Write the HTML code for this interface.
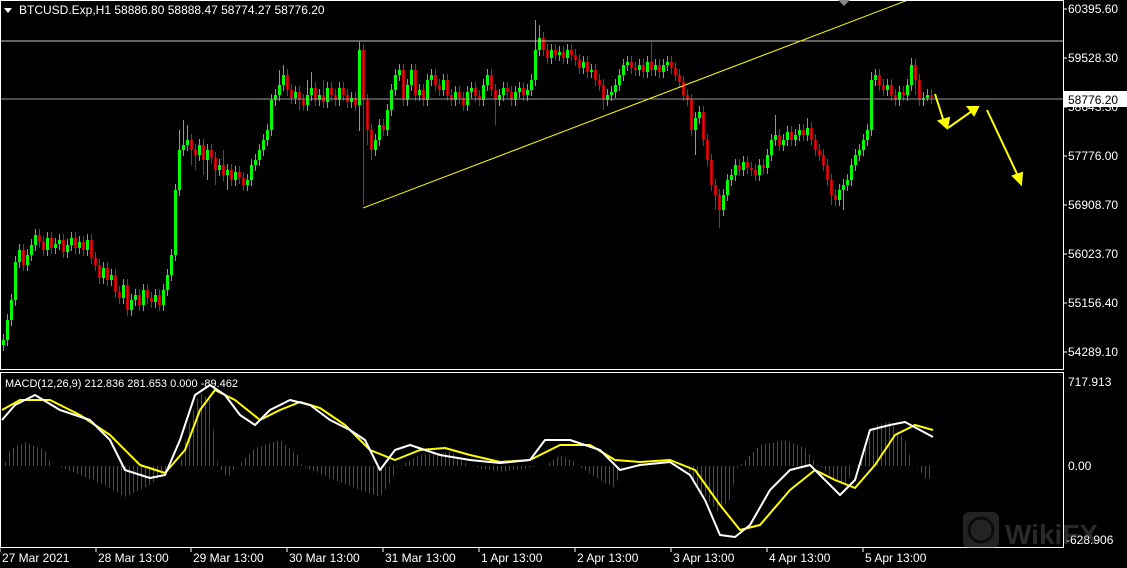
<!DOCTYPE html>
<html><head><meta charset="utf-8"><style>
html,body{margin:0;padding:0;background:#000;width:1127px;height:568px;overflow:hidden}
svg{display:block}
text{font-family:"Liberation Sans",sans-serif;font-size:12px;fill:#fff}
</style></head><body>
<svg width="1127" height="568" xmlns="http://www.w3.org/2000/svg">
<defs>
<pattern id="pr" x="0" y="0" width="4" height="10" patternUnits="userSpaceOnUse"><rect x="1" y="0" width="1" height="10" fill="#a02535"/></pattern>
<pattern id="pg" x="0" y="0" width="4" height="10" patternUnits="userSpaceOnUse"><rect x="1" y="0" width="1" height="10" fill="#1f6a1f"/></pattern>
</defs>
<rect width="1127" height="568" fill="#000"/>
<!-- histogram -->
<polygon fill="url(#pr)" points="4,466 10,450 25,442 45,450 52,466 180,466 190,420 200,392 210,400 218,466 238,466 255,448 280,440 298,455 302,466 400,466 420,455 450,452 470,466 545,466 560,455 575,462 578,466 740,466 760,445 785,440 805,448 818,466 857,466 875,425 890,422 905,440 913,466"/>
<polygon fill="url(#pg)" points="58,466 80,475 105,485 125,497 150,485 172,466 218,466 228,478 236,466 302,466 330,478 360,490 380,497 392,480 398,466 470,466 500,472 540,466 578,466 600,480 615,488 622,466 686,466 700,490 718,512 730,500 738,466 820,466 835,480 848,484 852,466 917,466 925,478 933,478 933,466"/>
<!-- candles -->
<path fill="none" stroke="#00ff00" stroke-width="1" d="M3.5 334V351M7.5 314V346M11.5 294V326M15.5 256V306M19.5 244V268M27.5 249V271M31.5 239V261M35.5 229V251M47.5 232V256M55.5 238V254M59.5 234V250M67.5 239V258M71.5 232V251M79.5 236V254M87.5 234V256M103.5 262V284M111.5 269V286M123.5 279V304M131.5 294V316M135.5 289V306M143.5 284V311M155.5 289V308M163.5 284V311M167.5 269V296M171.5 249V281M175.5 184V261M179.5 130V196M183.5 120V156M187.5 125V151M199.5 139V161M207.5 144V180M219.5 159V176M227.5 164V190M235.5 166V186M247.5 174V191M251.5 159V186M255.5 154V171M259.5 144V166M263.5 134V156M267.5 124V146M271.5 94V136M275.5 89V106M279.5 70V101M283.5 65V91M295.5 86V104M307.5 80V111M311.5 72V101M319.5 89V106M327.5 82V108M339.5 82V106M351.5 92V108M359.5 42V131M375.5 134V156M379.5 119V146M387.5 104V136M391.5 84V116M395.5 69V96M399.5 64V81M407.5 79V106M411.5 64V91M419.5 84V101M427.5 74V106M431.5 69V86M443.5 74V96M455.5 86V106M467.5 86V111M471.5 82V98M483.5 79V106M487.5 69V91M499.5 89V106M503.5 82V101M515.5 86V106M519.5 82V98M527.5 84V101M531.5 74V96M535.5 20V86M539.5 25V56M551.5 44V64M559.5 46V61M567.5 44V64M583.5 56V74M591.5 64V78M607.5 89V106M611.5 86V101M615.5 79V98M619.5 69V91M623.5 59V81M627.5 56V71M639.5 59V76M647.5 56V78M655.5 59V76M663.5 59V78M667.5 56V71M695.5 112V155M699.5 106V124M723.5 189V216M727.5 174V201M731.5 169V186M735.5 159V181M743.5 156V176M759.5 159V181M767.5 149V174M771.5 134V161M775.5 115V146M783.5 134V151M787.5 126V146M795.5 129V146M799.5 124V141M807.5 118V141M839.5 184V206M843.5 179V210M847.5 174V191M851.5 159V186M855.5 149V171M859.5 144V161M863.5 134V156M867.5 124V146M871.5 72V136M875.5 69V86M887.5 79V96M899.5 86V106M907.5 79V101M911.5 58V91M923.5 92V106M927.5 89V101"/>
<path fill="none" stroke="#00ff00" stroke-width="3" d="M3.5 340V345M7.5 320V340M11.5 300V320M15.5 262V300M19.5 250V262M27.5 255V265M31.5 245V255M35.5 235V245M47.5 238V250M55.5 244V248M59.5 240V244M67.5 245V252M71.5 238V245M79.5 242V248M87.5 240V250M103.5 268V278M111.5 275V280M123.5 285V298M131.5 300V310M135.5 295V300M143.5 290V305M155.5 295V302M163.5 290V305M167.5 275V290M171.5 255V275M175.5 190V255M179.5 150V190M183.5 145V150M187.5 140V145M199.5 145V155M207.5 150V160M219.5 165V170M227.5 170V175M235.5 172V180M247.5 180V185M251.5 165V180M255.5 160V165M259.5 150V160M263.5 140V150M267.5 130V140M271.5 100V130M275.5 95V100M279.5 85V95M283.5 75V85M295.5 92V98M307.5 95V105M311.5 88V95M319.5 95V100M327.5 88V102M339.5 88V100M351.5 98V102M359.5 50V105M375.5 140V150M379.5 125V140M387.5 110V130M391.5 90V110M395.5 75V90M399.5 70V75M407.5 85V100M411.5 70V85M419.5 90V95M427.5 80V100M431.5 75V80M443.5 80V90M455.5 92V100M467.5 92V105M471.5 88V92M483.5 85V100M487.5 75V85M499.5 95V100M503.5 88V95M515.5 92V100M519.5 88V92M527.5 90V95M531.5 80V90M535.5 50V80M539.5 38V50M551.5 50V58M559.5 52V55M567.5 50V58M583.5 62V68M591.5 70V72M607.5 95V100M611.5 92V95M615.5 85V92M619.5 75V85M623.5 65V75M627.5 62V65M639.5 65V70M647.5 62V72M655.5 65V70M663.5 65V72M667.5 62V65M695.5 118V130M699.5 112V118M723.5 195V210M727.5 180V195M731.5 175V180M735.5 165V175M743.5 162V170M759.5 165V175M767.5 155V168M771.5 140V155M775.5 135V140M783.5 140V145M787.5 132V140M795.5 135V140M799.5 130V135M807.5 128V135M839.5 190V200M843.5 185V190M847.5 180V185M851.5 165V180M855.5 155V165M859.5 150V155M863.5 140V150M867.5 130V140M871.5 80V130M875.5 75V80M887.5 85V90M899.5 92V100M907.5 85V95M911.5 65V85M923.5 98V100M927.5 95V98"/>
<path fill="none" stroke="#ff0000" stroke-width="1" d="M23.5 244V271M39.5 229V248M43.5 236V256M51.5 232V254M63.5 234V258M75.5 232V254M83.5 236V256M91.5 234V264M95.5 252V271M99.5 259V284M107.5 262V286M115.5 269V298M119.5 286V304M127.5 279V316M139.5 289V311M147.5 284V304M151.5 292V308M159.5 289V311M191.5 134V165M195.5 144V170M203.5 139V175M211.5 144V164M215.5 152V185M223.5 150V181M231.5 164V186M239.5 166V184M243.5 172V191M287.5 69V96M291.5 84V104M299.5 86V110M303.5 94V111M315.5 82V106M323.5 80V108M331.5 82V101M335.5 89V106M343.5 82V101M347.5 89V108M355.5 92V111M363.5 44V205M367.5 94V145M371.5 124V160M383.5 119V136M403.5 64V106M415.5 64V101M423.5 84V106M435.5 69V91M439.5 79V96M447.5 74V101M451.5 89V106M459.5 86V104M463.5 92V111M475.5 82V102M479.5 90V106M491.5 69V96M495.5 84V125M507.5 82V98M511.5 86V106M523.5 82V101M543.5 32V56M547.5 44V64M555.5 44V61M563.5 46V64M571.5 44V61M575.5 49V66M579.5 54V74M587.5 56V78M595.5 64V86M599.5 74V91M603.5 79V110M631.5 56V74M635.5 62V76M643.5 59V78M651.5 42V76M659.5 59V78M671.5 56V74M675.5 62V81M679.5 69V88M683.5 76V101M687.5 89V106M691.5 94V136M703.5 106V146M707.5 134V166M711.5 154V191M715.5 179V210M719.5 189V228M739.5 159V176M747.5 156V174M751.5 162V176M755.5 164V181M763.5 159V174M779.5 129V151M791.5 126V146M803.5 124V141M811.5 122V146M815.5 134V156M819.5 144V161M823.5 149V171M827.5 159V186M831.5 174V205M835.5 189V206M879.5 69V91M883.5 79V96M891.5 79V101M895.5 89V106M903.5 86V101M915.5 59V95M919.5 74V106M931.5 89V104"/>
<path fill="none" stroke="#ff0000" stroke-width="2.5" d="M23.5 250V265M39.5 235V242M43.5 242V250M51.5 238V248M63.5 240V252M75.5 238V248M83.5 242V250M91.5 240V258M95.5 258V265M99.5 265V278M107.5 268V280M115.5 275V292M119.5 292V298M127.5 285V310M139.5 295V305M147.5 290V298M151.5 298V302M159.5 295V305M191.5 140V150M195.5 150V155M203.5 145V160M211.5 150V158M215.5 158V170M223.5 165V175M231.5 170V180M239.5 172V178M243.5 178V185M287.5 75V90M291.5 90V98M299.5 92V100M303.5 100V105M315.5 88V100M323.5 95V102M331.5 88V95M335.5 95V100M343.5 88V95M347.5 95V102M355.5 98V105M363.5 50V100M367.5 100V130M371.5 130V150M383.5 125V130M403.5 70V100M415.5 70V95M423.5 90V100M435.5 75V85M439.5 85V90M447.5 80V95M451.5 95V100M459.5 92V98M463.5 98V105M475.5 88V96M479.5 96V100M491.5 75V90M495.5 90V100M507.5 88V92M511.5 92V100M523.5 88V95M543.5 38V50M547.5 50V58M555.5 50V55M563.5 52V58M571.5 50V55M575.5 55V60M579.5 60V68M587.5 62V72M595.5 70V80M599.5 80V85M603.5 85V100M631.5 62V68M635.5 68V70M643.5 65V72M651.5 62V70M659.5 65V72M671.5 62V68M675.5 68V75M679.5 75V82M683.5 82V95M687.5 95V100M691.5 100V130M703.5 112V140M707.5 140V160M711.5 160V185M715.5 185V195M719.5 195V210M739.5 165V170M747.5 162V168M751.5 168V170M755.5 170V175M763.5 165V168M779.5 135V145M791.5 132V140M803.5 130V135M811.5 128V140M815.5 140V150M819.5 150V155M823.5 155V165M827.5 165V180M831.5 180V195M835.5 195V200M879.5 75V85M883.5 85V90M891.5 85V95M895.5 95V100M903.5 92V95M915.5 65V80M919.5 80V100M931.5 95V98"/>
<line x1="1" y1="41" x2="1063" y2="41" stroke="#c8c8c8"/>
<line x1="1" y1="99" x2="1063" y2="99" stroke="#9a9a9a"/>
<line x1="363" y1="208" x2="908" y2="0" stroke="#ffff00"/>
<!-- MACD lines -->
<polyline fill="none" stroke="#ffff00" stroke-width="2" stroke-linejoin="round" points="2,410 20,400 50,400 80,415 110,435 140,465 165,473 185,450 200,410 215,390 235,400 260,420 280,410 300,402 320,408 345,425 370,450 395,460 420,450 445,448 470,455 500,462 530,460 560,445 590,445 615,460 640,462 670,460 695,470 720,505 740,530 760,525 790,490 815,470 835,480 855,488 875,465 895,435 915,425 933,430"/>
<polyline fill="none" stroke="#fff" stroke-width="2" stroke-linejoin="round" points="2,420 15,405 35,395 60,410 90,420 110,440 125,470 150,478 165,475 180,440 195,395 210,385 225,395 240,415 255,425 270,410 290,400 310,405 330,420 350,430 365,440 380,470 395,450 410,445 440,455 470,460 500,463 530,460 545,440 570,440 600,450 620,470 640,465 670,462 690,475 705,500 720,535 735,537 750,525 770,490 790,470 810,465 825,480 840,495 855,480 870,430 890,425 905,422 920,430 933,437"/>
<!-- arrows -->
<g stroke="#ffff00" stroke-width="2" fill="#ffff00">
<line x1="935" y1="94" x2="944" y2="122"/><polygon points="939,121 947,128 949,118"/>
<line x1="948" y1="128" x2="972" y2="111"/><polygon points="968,107 978,107 974,115"/>
<line x1="987" y1="110" x2="1018" y2="176"/><polygon points="1013,176 1021,184 1022,173"/>
</g>
<rect x="0.5" y="0.5" width="1063" height="369" fill="none" stroke="#fff"/>
<rect x="0.5" y="372.5" width="1063" height="175" fill="none" stroke="#fff"/>
<polygon points="838,0 850,0 844,6" fill="#888"/>
<polygon points="4,8 12,8 8,13" fill="#fff"/>
<text x="19" y="14">BTCUSD.Exp,H1  58886.80 58888.47 58774.27 58776.20</text>
<text x="5" y="387" style="font-size:11px">MACD(12,26,9) 212.836 281.653 0.000 -89.462</text>
<g stroke="#fff"><line x1="1063" y1="9" x2="1067" y2="9"/><line x1="1063" y1="58" x2="1067" y2="58"/><line x1="1063" y1="107" x2="1067" y2="107"/><line x1="1063" y1="156" x2="1067" y2="156"/><line x1="1063" y1="205" x2="1067" y2="205"/><line x1="1063" y1="254" x2="1067" y2="254"/><line x1="1063" y1="303" x2="1067" y2="303"/><line x1="1063" y1="352" x2="1067" y2="352"/></g>
<text x="1068" y="13">60395.60</text>
<text x="1068" y="62">59528.30</text>
<text x="1068" y="111">58643.30</text>
<text x="1068" y="160">57776.00</text>
<text x="1068" y="209">56908.70</text>
<text x="1068" y="258">56023.70</text>
<text x="1068" y="307">55156.40</text>
<text x="1068" y="356">54289.10</text>
<rect x="1064" y="91" width="63" height="16" fill="#fff"/>
<text x="1068" y="104" style="fill:#000">58776.20</text>
<text x="1068" y="386">717.913</text>
<text x="1068" y="470">0.00</text>
<text x="1066" y="544">-628.906</text>
<g opacity="0.35">
<rect x="963" y="512" width="36" height="36" rx="6" fill="#666"/>
<circle cx="981" cy="530" r="12" fill="none" stroke="#222" stroke-width="3"/>
<text x="1005" y="544" style="font-size:28px;font-weight:bold;fill:#777">WikiFX</text>
</g>
<g stroke="#fff"><line x1="0" y1="548" x2="0" y2="552"/><line x1="96" y1="548" x2="96" y2="552"/><line x1="191" y1="548" x2="191" y2="552"/><line x1="287" y1="548" x2="287" y2="552"/><line x1="383" y1="548" x2="383" y2="552"/><line x1="479" y1="548" x2="479" y2="552"/><line x1="575" y1="548" x2="575" y2="552"/><line x1="671" y1="548" x2="671" y2="552"/><line x1="767" y1="548" x2="767" y2="552"/><line x1="863" y1="548" x2="863" y2="552"/></g>
<text x="2" y="562">27 Mar 2021</text>
<text x="98" y="562">28 Mar 13:00</text>
<text x="193" y="562">29 Mar 13:00</text>
<text x="289" y="562">30 Mar 13:00</text>
<text x="385" y="562">31 Mar 13:00</text>
<text x="481" y="562">1 Apr 13:00</text>
<text x="577" y="562">2 Apr 13:00</text>
<text x="673" y="562">3 Apr 13:00</text>
<text x="769" y="562">4 Apr 13:00</text>
<text x="865" y="562">5 Apr 13:00</text>
</svg>
</body></html>
